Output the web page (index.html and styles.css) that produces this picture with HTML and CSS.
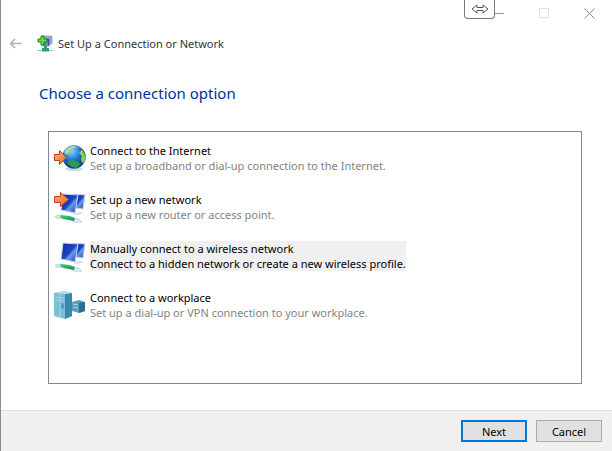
FILE: index.html
```html
<!DOCTYPE html>
<html lang="en">
<head>
    <meta charset="UTF-8">
    <meta name="viewport" content="width=device-width, initial-scale=1.0">
    <title>Set Up a Connection or Network</title>
    <link rel="stylesheet" href="styles.css">
</head>
<body>

    <form class="window">
        <div class="titlebar">
            <button type="button" class="caption" aria-label="Minimize">
                <svg width="11" height="11" viewBox="0 0 11 11"><path d="M0 5.5h10" stroke="#999"/></svg>
            </button>
            <button type="button" class="caption" aria-label="Maximize" disabled>
                <svg width="11" height="11" viewBox="0 0 11 11"><path d="M.5.5h9v9h-9z" fill="none" stroke="#e2e2e2"/></svg>
            </button>
            <button type="button" class="caption" aria-label="Close">
                <svg width="11" height="11" viewBox="0 0 11 11"><path d="M.5.5l10 10M10.5.5l-10 10" stroke="#888"/></svg>
            </button>
            <div class="resize-tab">
                <svg width="18" height="10" viewBox="0 0 18 10"><path d="M1 5l5-4v2.5h6V1l5 4-5 4V6.5H6V9z" fill="#fff" stroke="#555"/></svg>
            </div>
        </div>

        <header class="header">
            <button type="button" class="back" aria-label="Back" disabled>
                <svg width="13" height="11" viewBox="0 0 13 11"><path d="M12.5 5.5h-11M6 1L1.5 5.5 6 10" fill="none" stroke="#b0b0b0" stroke-width="1.5"/></svg>
            </button>
            <svg class="app-icon" width="16" height="17" viewBox="0 0 16 17">
                <path d="M6 1h9v8H6z" fill="#7f90c8" stroke="#a9b4d4"/>
                <path d="M5 3h8v8H5z" fill="#34499f" stroke="#bac7df"/>
                <path d="M8 7l3-2v5H7z" fill="#6685d0"/>
                <path d="M7 11h3v2h2v2H5v-2h2z" fill="#22a769"/>
                <path d="M0 15.500h5M12 15.500h4" stroke="#9fc9bd"/>
                <path d="M5 15.500h7" stroke="#22a769" stroke-width="2"/>
                <path d="M4 1h3v3h3v3H7v3H4V7H1V4h3z" fill="#65df36" stroke="#16821d"/>
            </svg>
            <span>Set Up a Connection or Network</span>
        </header>

        <main class="content">
            <h1>Choose a connection option</h1>

            <div class="options" role="radiogroup" aria-label="Connection option">
                <label class="option">
                    <input type="radio" name="option" value="internet">
                    <svg width="32" height="32" viewBox="0 0 32 32">
                        <defs>
                            <radialGradient id="globe" cx="40%" cy="25%" r="75%">
                                <stop offset="0" stop-color="#8ad5ff"/>
                                <stop offset=".5" stop-color="#2375cf"/>
                                <stop offset="1" stop-color="#0a3180"/>
                            </radialGradient>
                            <linearGradient id="arrow" x2="1" y2="1">
                                <stop offset="0" stop-color="#ffb37a"/>
                                <stop offset="1" stop-color="#ee6a1d"/>
                            </linearGradient>
                        </defs>
                        <ellipse cx="20" cy="27" rx="9" ry="2" fill="#cddce8"/>
                        <circle cx="20" cy="15" r="11.5" fill="url(#globe)" stroke="#3d76aa" stroke-width=".5"/>
                        <path d="M12 7c4-3 6-3 9-3l-2 4-3 1-1 4-4-1-1-2z" fill="#7fc79a"/>
                        <path d="M28 8c3 4 4 8 2 12l-2 1-1-4 1-3-3-3z" fill="#8ed43a"/>
                        <path d="M14 19l5-1 5 2 3 2-5 4-4-1-4-3z" fill="#2f9a4c"/>
                        <path d="M11 10c3-6 10-7 14-4-5-1-9 1-12 6z" fill="#fff" opacity=".35"/>
                        <path d="M.5 12.5h5v-4l7 7-7 7v-4h-5z" fill="url(#arrow)" stroke="#b94713"/>
                    </svg>
                    <span class="option-text">
                        <span class="option-title">Connect to the Internet</span>
                        <span class="option-desc">Set up a broadband or dial-up connection to the Internet.</span>
                    </span>
                </label>

                <label class="option">
                    <input type="radio" name="option" value="new-network">
                    <svg width="32" height="32" viewBox="0 0 32 32">
                        <defs>
                            <linearGradient id="screen" x2="1" y2="1">
                                <stop offset="0" stop-color="#0b2ca0"/>
                                <stop offset=".5" stop-color="#1c44c4"/>
                                <stop offset=".6" stop-color="#6b98ee"/>
                                <stop offset="1" stop-color="#1c42b0"/>
                            </linearGradient>
                            <linearGradient id="plug" x2="0" y2="1">
                                <stop offset="0" stop-color="#4fcf85"/>
                                <stop offset="1" stop-color="#078b45"/>
                            </linearGradient>
                        </defs>
                        <path d="M19 3l12 1-2 14-9-1z" fill="url(#screen)" stroke="#c4d4ec"/>
                        <path d="M9 3l15 1-3 18-14-3z" fill="url(#screen)" stroke="#c4d4ec"/>
                        <path d="M18 23l8-2 4 1-6 2z" fill="#d3dde5"/>
                        <path d="M1 25l7-1 3 4-9-1z" fill="#d5eadf" stroke="#a5cbb9" stroke-width=".6"/>
                        <path d="M19 27l6 1 3 3-4 2-6-3z" fill="#dce8ee" stroke="#a9c3cf" stroke-width=".6"/>
                        <path d="M7 24l9 1 5 2-1 3-10-2-4-2z" fill="url(#plug)"/>
                        <path d="M.5 5.500h6v-4l8 7-8 7v-4h-6z" fill="url(#arrow)" stroke="#b94713"/>
                    </svg>
                    <span class="option-text">
                        <span class="option-title">Set up a new network</span>
                        <span class="option-desc">Set up a new router or access point.</span>
                    </span>
                </label>

                <label class="option">
                    <input type="radio" name="option" value="wireless" checked>
                    <svg width="32" height="32" viewBox="0 0 32 32">
                        <path d="M19 3l12 1-2 14-9-1z" fill="url(#screen)" stroke="#c4d4ec"/>
                        <path d="M9 3l15 1-3 18-14-3z" fill="url(#screen)" stroke="#c4d4ec"/>
                        <path d="M18 23l8-2 4 1-6 2z" fill="#d3dde5"/>
                        <path d="M1 25l7-1 3 4-9-1z" fill="#d5e6f2" stroke="#a5c3d9" stroke-width=".6"/>
                        <path d="M19 27l6 1 3 3-4 2-6-3z" fill="#dce8ee" stroke="#a9c3cf" stroke-width=".6"/>
                        <path d="M7 24l9 1 5 2-1 3-10-2-4-2z" fill="url(#plug)"/>
                    </svg>
                    <span class="option-text">
                        <span class="option-title">Manually connect to a wireless network</span>
                        <span class="option-desc">Connect to a hidden network or create a new wireless profile.</span>
                    </span>
                </label>

                <label class="option">
                    <input type="radio" name="option" value="workplace">
                    <svg width="32" height="32" viewBox="0 0 32 32">
                        <path d="M18 13l7-2 6 2v9l-6 2-7-2z" fill="#5b9dba"/>
                        <path d="M25 14l6-1v9l-6 2z" fill="#306e8f"/>
                        <path d="M19 15l5 1M19 18l5 1" stroke="#a2d7e9"/>
                        <path d="M0 4l10-2 8 2v23l-7 3-11-3z" fill="#7cbdd9"/>
                        <path d="M11 5l7-1v23l-7 3z" fill="#3a88a8"/>
                        <path d="M0 4l10-2 8 2-7 1z" fill="#b9dfec"/>
                        <path d="M1 8l9 1M1 11l9 1M6 5v23" stroke="#a5d6e8"/>
                        <path d="M7 14l3 1v5l-3-1z" fill="#4d9fc2"/>
                    </svg>
                    <span class="option-text">
                        <span class="option-title">Connect to a workplace</span>
                        <span class="option-desc">Set up a dial-up or VPN connection to your workplace.</span>
                    </span>
                </label>
            </div>
        </main>

        <footer class="footer">
            <button type="button" class="btn btn-primary">Next</button>
            <button type="button" class="btn">Cancel</button>
        </footer>
    </form>

</body>
</html>
```
FILE: styles.css
```css
* {
    box-sizing: border-box;
}

body {
    margin: 0;
    background-color: #fff;
    color: #000;
    font-family: "Noto Sans", "Open Sans", sans-serif;
    font-size: 11px;
    line-height: 15px;
}

button {
    font: inherit;
    padding: 0;
}

svg {
    display: block;
    flex-shrink: 0;
}

.window {
    display: flex;
    flex-direction: column;
    min-height: 100vh;
    border-left: 1px solid #8c8c8c;
}

.titlebar {
    position: relative;
    display: flex;
    justify-content: flex-end;
    height: 26px;
}

.caption {
    display: flex;
    align-items: center;
    justify-content: center;
    width: 45px;
    border: 0;
    background: none;
}

/* drag handle hanging from the top edge */
.resize-tab {
    position: absolute;
    top: 0;
    right: 117px;
    display: flex;
    align-items: center;
    justify-content: center;
    width: 31px;
    height: 19px;
    border: 1px solid #777;
    border-top: 0;
    border-radius: 0 0 4px 4px;
    background-color: #fff;
}

.header {
    display: flex;
    align-items: center;
    height: 35px;
    padding-left: 8px;
    color: #333;
}

.back {
    border: 0;
    background: none;
}

.app-icon {
    margin-left: 15px;
    margin-right: 5px;
}

.content {
    flex: 1;
    display: flex;
    flex-direction: column;
    padding: 20px 30px 26px 47px;
}

h1 {
    margin: 0 0 26px -9px;
    color: #003399;
    font-size: 15px;
    font-weight: normal;
    line-height: 24px;
}

.options {
    flex: 1;
    display: flex;
    flex-direction: column;
    gap: 17px;
    padding: 10px 5px;
    border: 1px solid #828790;
}

.option {
    display: flex;
    align-items: center;
    gap: 4px;
}

.option input {
    position: absolute;
    opacity: 0;
    pointer-events: none;
}

.option-title,
.option-desc {
    display: block;
}

.option-desc {
    color: #838383;
}

.option input:checked ~ .option-text {
    background-color: #f0f0f0;
}

.option input:checked ~ .option-text .option-desc {
    color: #000;
}

.footer {
    display: flex;
    justify-content: flex-end;
    gap: 9px;
    padding: 9px 10px;
    border-top: 1px solid #dfdfdf;
    background-color: #f0f0f0;
}

.btn {
    width: 66px;
    height: 22px;
    border: 1px solid #adadad;
    background-color: #e1e1e1;
    color: #000;
}

.btn-primary {
    border: 2px solid #0078d7;
}
```
